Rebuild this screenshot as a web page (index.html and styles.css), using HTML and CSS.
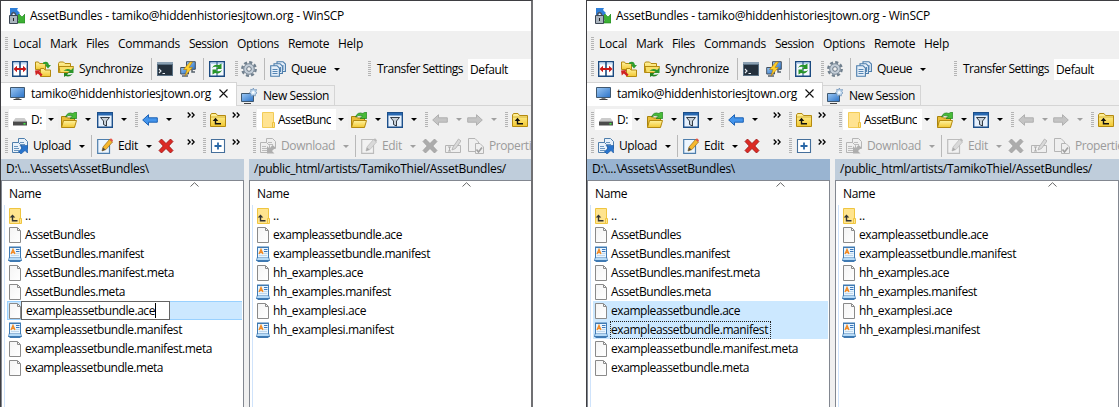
FILE: index.html
```html
<!DOCTYPE html>
<html lang="en">
<head>
<meta charset="utf-8">
<title>AssetBundles - WinSCP</title>
<link rel="stylesheet" href="styles.css">
</head>
<body>
<svg class="defs" aria-hidden="true">
  <linearGradient id="fold" x1="0" y1="0" x2="0" y2="1"><stop offset="0" stop-color="#fff3a0"/><stop offset="1" stop-color="#f2c832"/></linearGradient>
  <linearGradient id="scr" x1="0" y1="0" x2="1" y2="1"><stop offset="0" stop-color="#9cc8f4"/><stop offset="1" stop-color="#2a72c8"/></linearGradient>
  <linearGradient id="paper" x1="0" y1="0" x2="1" y2="1"><stop offset="0" stop-color="#f4f4f4"/><stop offset="1" stop-color="#fff"/></linearGradient>
  <symbol id="app" viewBox="0 0 16 16"><path d="M1 0H9L8 2L11 5L8 8L5 5L3 7H1Z" fill="#2f7fd8"/><path d="M16 6V15H8L10 12L7 9L10 6L13 9Z" fill="#3cb034" stroke="#1c7c1c" stroke-width=".6"/><path d="M2.500 8V6Q4.500 3 6.500 6V8" fill="none" stroke="#4a5462" stroke-width="1.500"/><path d="M.5 7.500H8.500V15.500H.5Z" fill="#aab4be" stroke="#3c4654"/><path d="M4 10H5V13H4Z" fill="#222"/></symbol>
  <symbol id="panes" viewBox="0 0 16 16"><path d="M.7.7H15.300V15.300H.7Z" fill="#fff" stroke="#1b4a80" stroke-width="1.400"/><path d="M1.500 1.500H14.500V3.500H1.500Z" fill="#c8e0fa"/><path d="M8 1V15" stroke="#1b4a80" stroke-width="1.600"/><path d="M1.500 8L5 4.800V7H11V4.800L14.500 8L11 11.200V9H5V11.200Z" fill="#c81818"/></symbol>
  <symbol id="dual" viewBox="0 0 16 16"><path d="M.5 1H3.500L4.500 2.500H10.500V8.500H.5Z" fill="url(#fold)" stroke="#b48a10"/><path d="M5.500 7.500H9L10 9H15.500V15.500H5.500Z" fill="url(#fold)" stroke="#b48a10"/><path d="M8 1.500Q13-1 14 4H16L13 7.500L10 4H11.500Q11 2.500 8 3Z" fill="#2e9c2e"/><path d="M0 9.500L5.500 9L4.500 10.800L7.500 13.500L6 15.500L2.800 12.500L.8 14.500Z" fill="#d02222"/></symbol>
  <symbol id="sync" viewBox="0 0 16 16"><path d="M.5 2.500L1.500 1H5.500L7 2.500H12.500V11.500H.5Z" fill="url(#fold)" stroke="#b48a10"/><path d="M1 5.500H15.500L14 11.500H2Z" fill="#f8df68" stroke="#b48a10"/><path d="M5.500 10Q9 6.500 13 9L15.500 7V12H10L11.500 10.500Q8.500 9.500 5.500 10Z" fill="#2c962c"/><path d="M6 12H10.500L9 13.500Q12 14.500 15 12.500Q12 16.500 7.500 15L6 16Z" fill="#228522"/></symbol>
  <symbol id="term" viewBox="0 0 16 16"><path d="M0 1H16V15H0Z" fill="#5a7184"/><path d="M1 4H15V14H1Z" fill="#24303c"/><path d="M0 1H16V3H0Z" fill="#8ba0b2"/><path d="M2 8L4 10L2 12M5.500 12.500H8" fill="none" stroke="#e8eef4" stroke-width="1.100"/></symbol>
  <symbol id="bolt" viewBox="0 0 16 16"><path d="M6.500.7H15.300V8.300H6.500Z" fill="url(#scr)" stroke="#45515e"/><path d="M.7 6.500H8.500V13H.7Z" fill="url(#scr)" stroke="#45515e"/><path d="M2 15H8M12 9V11H15" stroke="#56616c" stroke-width="1.500" fill="none"/><path d="M10 1L3.500 8.500H7L5 15L12.500 6.500H9L12.500 1Z" fill="#ffcf2a" stroke="#b87d08" stroke-width=".6"/></symbol>
  <symbol id="refresh" viewBox="0 0 16 16"><path d="M.7.7H15.300V15.300H.7Z" fill="#f4f9ff" stroke="#1b4a80" stroke-width="1.400"/><path d="M1.500 1.500H14.500V3H1.500Z" fill="#b9d6f3"/><path d="M8 1V15" stroke="#1b4a80" stroke-width="1"/><path d="M3 7Q5 2.500 10 4L12.500 2.500V8H7L9 6Q5 5 3 7ZM13 9Q11 13.500 6 12L3.500 13.500V8.500H9L7 10Q11 11 13 9Z" fill="#279527"/></symbol>
  <symbol id="gear" viewBox="0 0 16 16"><circle cx="8" cy="8" r="6.700" fill="none" stroke="#71808e" stroke-width="2.400" stroke-dasharray="3.100 2.160"/><circle cx="8" cy="8" r="5.300" fill="#c4ced8" stroke="#798897"/><circle cx="8" cy="8" r="2.300" fill="#f0f0f0" stroke="#697887"/></symbol>
  <symbol id="queue" viewBox="0 0 16 16"><g fill="#e5eff9" stroke="#4b7cab" stroke-width="1.100"><path d="M7 .7H13L15.400 3V10.500H7Z"/><path d="M4 2.700H10L12.400 5V12.500H4Z"/><path d="M.7 4.700H7L9.400 7V15.300H.7Z"/></g><path d="M2.500 8.500H7.500M2.500 10.500H7.500M2.500 12.500H7.500M13 4V9M10.500 6V11" stroke="#5686b4"/></symbol>
  <symbol id="monitor" viewBox="0 0 16 16"><path d="M1.500 1.500H15.500V11.500H1.500Z" fill="url(#scr)" stroke="#3f5870"/><path d="M6.500 12H10.500V13H6.500Z" fill="#777"/><path d="M4.500 13H12.500V14H4.500Z" fill="#444"/></symbol>
  <symbol id="newmon" viewBox="0 0 16 16"><path d="M.5 5.500H12.500V13.500H.5Z" fill="url(#scr)" stroke="#3f5870"/><path d="M3 15.500H10" stroke="#444"/><path d="M12.300 0L13.200 2L15.500 1.500L14.800 3.700L16 5L14.300 6.200L14.300 8L12.300 7.200L10.200 8.200L10 6L8.300 4.800L10 3.400L9.700 1.300L11.700 1.800Z" fill="#c8def2" stroke="#688eb5" stroke-width=".7"/><circle cx="12.200" cy="4.400" r="1.200" fill="#fff"/></symbol>
  <symbol id="drive" viewBox="0 0 14 14"><path d="M2.500 5H11.500L14 8.500H0Z" fill="#ccc"/><path d="M0 8.500H14V12.500H0Z" fill="#4c4c4c"/><path d="M10.500 10H12.500V11.500H10.500Z" fill="#43ee43"/></symbol>
  <symbol id="open" viewBox="0 0 16 16"><path d="M.5 15V4.500H5L6.500 6H13.500V15Z" fill="#e9bd38" stroke="#a8820c"/><path d="M2.500 8.500H15.500L13.500 15.500H.5Z" fill="url(#fold)" stroke="#b48a10"/><path d="M4.500 5Q6.500-.5 12 1.500L13.500.300H15.700V6.500H9L11.500 4.200Q7.500 2.500 4.500 5Z" fill="#48bb38" stroke="#1d7d1d" stroke-width=".7"/></symbol>
  <symbol id="filter" viewBox="0 0 16 16"><path d="M.7.7H15.300V15.300H.7Z" fill="#e6f1fd" stroke="#1c4f8a" stroke-width="1.400"/><path d="M1 1H15V3.500H1Z" fill="#2868b0"/><path d="M3.500 5.500H12.500L9.500 9V14L6.500 12.500V9Z" fill="#c9d1d8" stroke="#333c46"/></symbol>
  <symbol id="left" viewBox="0 0 16 16"><path d="M.7 8L6.500 2.700V5.800H15.300V10.200H6.500V13.300Z" fill="#4394ec" stroke="#1c61b4"/></symbol>
  <symbol id="right" viewBox="0 0 16 16"><path d="M15.300 8L9.500 2.700V5.800H.7V10.200H9.500V13.300Z" fill="#4394ec" stroke="#1c61b4"/></symbol>
  <symbol id="up" viewBox="0 0 16 16"><path d="M.5 14.500V3L1.500 1.500H6L7.500 3.500H15.500V14.500Z" fill="url(#fold)" stroke="#b48a10"/><path d="M1 5H15" stroke="#c8a020" stroke-width=".7"/><path d="M2.700 9L5.500 5.700L8.300 9H6.200V11H11V12.400H4.800V9Z" fill="#111"/></symbol>
  <symbol id="upload" viewBox="0 0 16 16"><g fill="#e8f1fa" stroke="#4e7eac"><path d="M6.500.5H12.500L15.500 3.500V10.500H6.500Z"/><path d="M.5 4.500H6.500L9.500 7.500V14.500H.5Z"/></g><path d="M2 8.500H6M2 10.500H7M2 12.500H7M8 4.500H12M8 6.500H13" stroke="#6a95be"/><path d="M8 7.500H15.500V15L13 12.500L9 16L6.500 13.500L10.500 10Z" fill="#2874cd" stroke="#1a559d" stroke-width=".6"/></symbol>
  <symbol id="download" viewBox="0 0 16 16"><g fill="#eee" stroke="#666"><path d="M6.500.5H12.500L15.500 3.500V10.500H6.500Z"/><path d="M.5 4.500H6.500L9.500 7.500V14.500H.5Z"/></g><path d="M2 8.500H6M2 10.500H7M2 12.500H7M8 4.500H12M8 6.500H13" stroke="#777"/><path d="M7 15.500V8L9.500 10.500L12.500 7L15.500 9.500L12 13L14.500 15.500Z" fill="#555"/></symbol>
  <symbol id="edit" viewBox="0 0 16 16"><path d="M.7 1.500H12.500V15.300H.7Z" fill="#edf6ff" stroke="#4e7eac" stroke-width="1.200"/><path d="M5 13L6 9L12.500 1.500L15.500 4L9 11.500Z" fill="#f6b82e" stroke="#966a1c" stroke-width=".7"/><path d="M12.500 1.500L14 .2L16 2.200L15.200 4Z" fill="#e55345"/><path d="M5 13L6 9.500L8.500 11.500Z" fill="#494949"/></symbol>
  <symbol id="cross" viewBox="0 0 16 16"><path d="M1 3.500L3.500 1L8 5.500L12.500 1L15 3.500L10.800 8L15 12.500L12.500 15L8 10.500L3.500 15L1 12.500L5.200 8Z" fill="#dc2a24" stroke="#9b1010" stroke-width=".8"/></symbol>
  <symbol id="plus" viewBox="0 0 16 16"><path d="M1.500 1.500H14.500V14.500H1.500Z" fill="#fff" stroke="#456f9b" stroke-width="1.100"/><path d="M8 4.500V11.500M4.500 8H11.500" stroke="#2766a6" stroke-width="1.800"/></symbol>
  <symbol id="rename" viewBox="0 0 16 16"><path d="M.5 7.500H15.500V14.500H.5Z" fill="#eee" stroke="#666"/><path d="M3 9H6M4.500 9V13M3 13H6" stroke="#555"/><path d="M7 12L8 9L13.500 1L16 3L10.500 10.500Z" fill="#bbb" stroke="#555" stroke-width=".8"/></symbol>
  <symbol id="props" viewBox="0 0 16 16"><path d="M.5.500H7L10.500 4V13.500H.5Z" fill="#eee" stroke="#666"/><path d="M7.500 5.500H12L15.500 9V15.500H7.500Z" fill="#eee" stroke="#666"/><path d="M8.500 11.500L10.500 14L14 9.500" fill="none" stroke="#333" stroke-width="1.600"/></symbol>
  <symbol id="plain" viewBox="0 0 13 16"><path d="M.5.500H11.500V15.500H.5Z" fill="#ffe391" stroke="#f2cc58"/><path d="M10.500 10.500H12.500V15.500H10.500Z" fill="#ffe391" stroke="#edc13f"/></symbol>
  <symbol id="parent" viewBox="0 0 14 16"><path d="M1.500.500H12.500V15.500H1.500Z" fill="#ffe48e" stroke="#efc540"/><path d="M11.500 10.500H13.500V15.500H11.500Z" fill="#ffe48e" stroke="#efc540"/><path d="M1.700 9.500L4.500 6.500L7.300 9.500H5.200V12H9.500V13.400H3.800V9.500Z" fill="#333"/></symbol>
  <symbol id="file" viewBox="0 0 14 16"><path d="M1.500.500H9.500L12.500 3.500V15.500H1.500Z" fill="url(#paper)" stroke="#8a8a8a"/><path d="M9.500 1V3.500H12" fill="none" stroke="#8a8a8a"/></symbol>
  <symbol id="manifest" viewBox="0 0 14 16"><path d="M1 .5H13V11L14 15H13L12 16H2L1 15H0L1 11Z" fill="#3f7ab3"/><path d="M2 2H12V11.500H2Z" fill="#e8f5ff"/><path d="M1.500 12H12.500L13 14H1Z" fill="#b5daf7"/><path d="M3 8L5 3.500L7 8M3.800 6.500H6.200" fill="none" stroke="#f28a24" stroke-width="1.400"/><path d="M8 3.500H11.500M8 5.500H11.500" stroke="#3c78bc"/><path d="M8 7.500H11.500M3 9.500H11" stroke="#b4cfe6" stroke-width=".8"/></symbol>
</svg>
<main class="desktop" id="desktop"></main>
<script src="app.js"></script>
</body>
</html>
```
FILE: styles.css
```css
* { box-sizing: border-box; }
body { margin: 0; background: #fff; color: #000; font: 12px/16px "Open Sans", "Noto Sans", sans-serif; }
.defs { position: absolute; width: 0; height: 0; }
.desktop { display: flex; gap: 53px; width: 1119px; height: 407px; overflow: hidden; }
.window { position: relative; flex: none; width: 533px; height: 407px; overflow: hidden; background: #f0f0f0; display: flex; flex-direction: column; }
.window::after { content: ""; position: absolute; inset: 0; border: solid #3e3e42; border-width: 1px 2px 0 1px; border-right-color: #707073; pointer-events: none; }
.window.cut::after { border-right: 0; }
.t { flex: none; display: block; white-space: pre; }
.icon { flex: none; display: block; width: 16px; height: 16px; }

.title { height: 31px; background: #fff; display: flex; align-items: center; gap: 5px; padding: 1px 0 0 9px; flex: none; }
.menu { height: 25px; display: flex; align-items: center; gap: 9px; flex: none; padding-top: 1px; }
.menu .grip { height: 14px; margin-right: -4px; }
.bar { display: flex; align-items: center; flex: none; overflow: hidden; }
.main { height: 26px; }
.nav { height: 27px; }
.cmd { height: 26px; }
.grip { flex: none; width: 3px; height: 16px; margin: 0 1px 0 5px; background: repeating-linear-gradient(#b4b4b4 0 1px, #f0f0f0 1px 2px); }
.btn { flex: none; display: flex; align-items: center; gap: 5px; padding: 0 4px 0 3px; }
.off .icon { filter: grayscale(1); opacity: .42; }
.off { color: #9b9b9b; }
.caret { flex: none; width: 13px; display: flex; padding-left: 4px; }
.caret::before { content: ""; border: solid transparent; border-width: 3px 3px 0; border-top-color: #000; }
.caret.off::before { border-top-color: #a0a0a0; }
.caret.slim { width: 12px; }
.sep { flex: none; width: 1px; height: 22px; margin: 0 2px 0 3px; background: #b9b9b9; }
.sep.wide { margin-left: 4px; }
.more { flex: none; align-self: flex-start; width: 18px; height: 7px; margin-top: 6px; padding-left: 2px; }
.more.far { width: 23px; padding-left: 12px; }
.more.mid { width: 20px; padding-left: 9px; }
.more svg { display: block; width: 8px; height: 6px; }
.grip.tools { margin-left: 6px; margin-right: 0; }
.grip.transfer { margin-left: 25px; margin-right: 6px; }
.field { align-self: flex-start; flex: 1; height: 21px; margin: 3px 0 0 5px; padding: 3px 2px; background: #fff; }

.tabs { height: 24px; display: flex; align-items: flex-end; flex: none; border-bottom: 1px solid #d5d5d5; }
.tab { display: flex; align-items: center; height: 20px; width: 98px; padding-left: 4px; gap: 6px; border: solid #d5d5d5; border-width: 1px 1px 0 0; }
.tab.active { height: 24px; width: 237px; margin-bottom: -1px; padding: 0 0 2px 9px; background: #fff; }
.close { width: 9px; height: 9px; margin-left: 2px; }

.combo { flex: none; display: flex; align-items: center; height: 21px; background: #fff; overflow: hidden; }
.combo.drive { width: 49px; padding-left: 4px; gap: 4px; }
.combo.drive .icon { width: 14px; height: 14px; }
.combo.dir { width: 91px; padding-left: 5px; gap: 3px; }
.combo.dir .icon { width: 13px; }
.drop { flex: none; display: flex; align-items: center; height: 21px; width: 12px; margin-left: auto; padding-left: 2px; background: #f2f2f2; overflow: hidden; }
.drop::before { content: ""; border: solid transparent; border-width: 3px 3px 0; border-top-color: #000; }
.clip { overflow: hidden; }

.panels { flex: 1; min-height: 0; display: grid; grid-template-columns: 244px 1fr; gap: 5px; }
.panel { display: flex; flex-direction: column; min-width: 0; }
.path { height: 21px; background: #bfcddb; padding: 2px 0 0 6px; overflow: hidden; flex: none; }
.panel:last-child .path { padding-left: 5px; }
.path.focus { background: #99b4d1; }
.list { flex: 1; background: #fff; border: 1px solid #828790; border-bottom: 0; display: flex; flex-direction: column; }
.panel:first-child .list { margin-left: 1px; }
.head { height: 24px; padding: 5px 0 0 7px; position: relative; flex: none; }
.sort { position: absolute; top: 1px; left: 188px; width: 9px; height: 5px; }
.panel:last-child .sort { left: 212px; }
.rows { flex: 1; margin-left: 2px; border-left: 1px solid #cfe3fb; padding: 1px 1px 0 2px; }
.row { display: flex; align-items: center; height: 19px; padding-left: 1px; gap: 3px; }
.row .icon { width: 14px; }
.row.sel { background: #cce8ff; }
.row.edge { border: 1px solid #99d1ff; border-right: 0; padding-left: 0; }
.input { width: 149px; height: 19px; margin-left: -4px; padding-left: 4px; background: #fff; border: 1px solid #646464; display: flex; align-items: center; flex: none; }
.input::after { content: ""; width: 1px; height: 15px; background: #000; }
.mark { outline: 1px dotted #222; margin-right: 2px; box-sizing: content-box; padding-right: 2px; }
```
FILE: app.js
```js
const icon = (n) => `<svg class="icon"><use href="#${n}"/></svg>`;
// Label with a nominal width in pixels; the tracking is fitted below.
const t = (s, w, c = '') => `<span class="t ${c}" data-w="${w}">${s}</span>`;
const btn = (n, label = '', c = '') => `<span class="btn ${c}">${icon(n)}${label}</span>`;
const grip = (c = '') => `<span class="grip ${c}"></span>`;
const sep = (c = '') => `<span class="sep ${c}"></span>`;
const caret = (c = '') => `<span class="caret ${c}"></span>`;
const more = (c = '') => `<span class="more ${c}"><svg viewBox="0 0 8 6"><path d="M.7.500L3.200 3L.7 5.500M4.700.500L7.200 3L4.700 5.500" fill="none" stroke="#000" stroke-width="1.300"/></svg></span>`;
const drop = '<span class="drop"></span>';

const local = [
  ['parent', '..', 6], ['file', 'AssetBundles', 70], ['manifest', 'AssetBundles.manifest', 119],
  ['file', 'AssetBundles.manifest.meta', 149], ['file', 'AssetBundles.meta', 100],
  ['file', 'exampleassetbundle.ace', 129], ['manifest', 'exampleassetbundle.manifest', 157],
  ['file', 'exampleassetbundle.manifest.meta', 187], ['file', 'exampleassetbundle.meta', 138]
];
const remote = [
  ['parent', '..', 6], ['file', 'exampleassetbundle.ace', 129], ['manifest', 'exampleassetbundle.manifest', 157],
  ['file', 'hh_examples.ace', 90], ['manifest', 'hh_examples.manifest', 118],
  ['file', 'hh_examplesi.ace', 93], ['manifest', 'hh_examplesi.manifest', 121]
];

function row([kind, name, w], i, state) {
  const sel = state && state.selected.includes(i);
  const editing = state && state.editing === i;
  const label = editing ? `<span class="input">${t(name, w)}</span>`
    : t(name, w, state && state.marked === i ? 'mark' : '');
  return `<div class="row ${sel ? 'sel' : ''} ${editing ? 'edge' : ''}">${icon(kind)}${label}</div>`;
}

function panel(path, w, files, state) {
  return `<section class="panel"><div class="path ${state && state.focus ? 'focus' : ''}">${t(path, w)}</div>
    <div class="list"><div class="head">${t('Name', 32)}<svg class="sort" viewBox="0 0 9 5"><path d="M.5 4.500L4.500.700L8.500 4.500" fill="none" stroke="#666"/></svg></div>
    <div class="rows">${files.map((f, i) => row(f, i, state)).join('')}</div></div></section>`;
}

function win(state) {
  const menu = [['Local', 28], ['Mark', 27], ['Files', 23], ['Commands', 62], ['Session', 39], ['Options', 42], ['Remote', 41], ['Help', 25]];
  return `<article class="window ${state.cut ? 'cut' : ''}">
    <header class="title">${icon('app')}${t('AssetBundles - tamiko@hiddenhistoriesjtown.org - WinSCP', 314)}</header>
    <nav class="menu">${grip()}${menu.map(([s, w]) => t(s, w)).join('')}</nav>
    <div class="bar main">${grip()}${btn('panes')}${btn('dual')}${btn('sync', t('Synchronize', 64))}${sep('wide')}${btn('term')}${btn('bolt')}${sep()}${btn('refresh')}${grip('tools')}${btn('gear')}${sep()}${btn('queue', t('Queue', 35))}${caret()}${grip('transfer')}${t('Transfer Settings', 86)}<span class="field">${t('Default', 38)}</span></div>
    <div class="tabs"><div class="tab active">${icon('monitor')}${t('tamiko@hiddenhistoriesjtown.org', 180)}<svg class="close" viewBox="0 0 9 9"><path d="M.5.500L8.500 8.500M8.500.500L.5 8.500" stroke="#111" stroke-width="1.100"/></svg></div><div class="tab">${icon('newmon')}${t('New Session', 66)}</div></div>
    <div class="bar nav">${grip()}<span class="combo drive">${icon('drive')}${t('D:', 11)}${drop}</span>${btn('open')}${caret()}${btn('filter')}${caret()}${grip()}${btn('left')}${caret()}${more('far')}${grip()}${btn('up')}${more()}${grip()}<span class="combo dir">${icon('plain')}${t('AssetBunc', 53, 'clip')}${drop}</span>${btn('open')}${caret()}${btn('filter')}${caret()}${grip()}${btn('left', '', 'off')}${caret('off slim')}${btn('right', '', 'off')}${caret('off')}${grip()}${btn('up')}</div>
    <div class="bar cmd">${grip()}${btn('upload', t('Upload', 38))}${caret()}${sep()}${btn('edit', t('Edit', 20))}${caret()}${btn('cross')}${more('mid')}${grip()}${btn('plus')}${more()}${grip()}${btn('download', t('Download', 54), 'off')}${caret('off')}${sep()}${btn('edit', t('Edit', 20), 'off')}${caret('off')}${btn('cross', '', 'off')}${btn('rename', '', 'off')}${btn('props', t('Properties', 54), 'off')}</div>
    <div class="panels">${panel('D:\\...\\Assets\\AssetBundles\\', 143, local, state)}${panel('/public_html/artists/TamikoThiel/AssetBundles/', 252, remote)}</div>
  </article>`;
}

document.getElementById('desktop').innerHTML =
  win({ selected: [5], editing: 5 }) + win({ selected: [5, 6], marked: 6, focus: true, cut: true });

for (const el of document.querySelectorAll('.t')) {
  const w = +el.dataset.w;
  el.style.width = 'max-content';
  const range = document.createRange();
  range.selectNodeContents(el);
  const natural = range.getBoundingClientRect().width;
  el.style.letterSpacing = (w - natural) / el.textContent.length + 'px';
  el.style.width = w + 'px';
}
```
